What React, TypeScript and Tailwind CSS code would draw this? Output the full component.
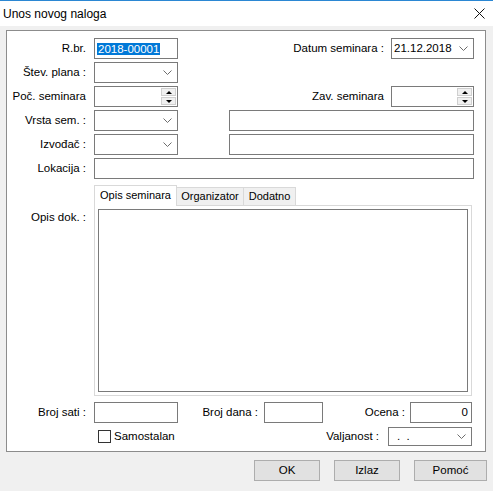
import React from 'react';

const Chevron = () => (
  <svg width="9" height="5" viewBox="0 0 9 5" className="shrink-0">
    <path d="M0.5 0.5 L4.5 4.5 L8.5 0.5" fill="none" stroke="#6d6d6d" strokeWidth="1" />
  </svg>
);

const Label = ({ children, w = 'w-[79px]' }: { children: React.ReactNode; w?: string }) => (
  <div className={`${w} shrink-0 text-right whitespace-nowrap leading-[13px]`}>{children}</div>
);

const TextBox = ({ className = 'w-[84px]', children }: { className?: string; children?: React.ReactNode }) => (
  <div className={`${className} flex h-[21px] shrink-0 items-center border border-[#7a7a7a] bg-white`}>{children}</div>
);

const Select = ({ className = 'w-[84px]', text, h = 'h-[21px]', textClass = 'pl-[2px]' }: { className?: string; text?: string; h?: string; textClass?: string }) => (
  <div className={`${className} ${h} flex shrink-0 items-center justify-between border border-[#7a7a7a] bg-white pr-[5px]`}>
    <span className={`${textClass} whitespace-pre leading-[13px]`}>{text ?? ''}</span>
    <Chevron />
  </div>
);

const Spin = ({ className = 'w-[84px]' }: { className?: string }) => (
  <div className={`${className} flex h-[21px] shrink-0 justify-end border border-[#7a7a7a] bg-white p-px`}>
    <div className="flex w-[15px] flex-col gap-px">
      <div className="flex flex-1 items-center justify-center border border-[#cfcfcf] bg-[#f0f0f0]">
        <div className="h-0 w-0 border-x-[3px] border-b-[3px] border-x-transparent border-b-black" />
      </div>
      <div className="flex flex-1 items-center justify-center border border-[#cfcfcf] bg-[#f0f0f0]">
        <div className="h-0 w-0 border-x-[3px] border-t-[3px] border-x-transparent border-t-black" />
      </div>
    </div>
  </div>
);

const Row = ({ children, className = '' }: { children: React.ReactNode; className?: string }) => (
  <div className={`flex h-[21px] items-center ${className}`}>{children}</div>
);

export default function App() {
  return (
    <div className="h-[491px] w-[493px] overflow-hidden bg-[#f0f0f0] font-['Liberation_Sans',Arial,sans-serif] text-[11.5px] text-black">
      {/* title bar */}
      <div className="flex h-[26px] items-center justify-between border-t border-[#2b87d3] bg-white pl-[3px] pr-[8px]">
        <span className="text-[12px] leading-[16px]">Unos novog naloga</span>
        <svg width="11" height="11" viewBox="0 0 11 11">
          <path d="M0.5 0.5 L10.5 10.5 M10.5 0.5 L0.5 10.5" stroke="#111" strokeWidth="1" />
        </svg>
      </div>

      <div className="px-[6px] pt-[4px]">
        {/* group box */}
        <div className="flex h-[422px] w-[480px] flex-col border border-[#8c8c8c] bg-white pt-[7px]">
          <div className="flex flex-col gap-[3px] pr-[11px]">
            <Row>
              <Label>R.br.</Label>
              <TextBox className="ml-[8px] w-[84px]">
                <span className="ml-[2px] bg-[#0078d7] px-px leading-[12px] text-white">2018-00001</span>
              </TextBox>
              <div className="flex-1" />
              <Label w="">Datum seminara :</Label>
              <Select className="ml-[7px] w-[83px]" text="21.12.2018" />
            </Row>
            <Row>
              <Label>Štev. plana :</Label>
              <Select className="ml-[8px] w-[84px]" />
            </Row>
            <Row>
              <Label>Poč. seminara</Label>
              <Spin className="ml-[8px] w-[84px]" />
              <div className="flex-1" />
              <Label w="">Zav. seminara</Label>
              <Spin className="ml-[7px] w-[83px]" />
            </Row>
            <Row>
              <Label>Vrsta sem. :</Label>
              <Select className="ml-[8px] w-[84px]" />
              <TextBox className="ml-[51px] flex-1" />
            </Row>
            <Row>
              <Label>Izvođač :</Label>
              <Select className="ml-[8px] w-[84px]" />
              <TextBox className="ml-[51px] flex-1" />
            </Row>
            <Row>
              <Label>Lokacija :</Label>
              <TextBox className="ml-[8px] flex-1" />
            </Row>
          </div>

          {/* tabs */}
          <div className="ml-[87px] mt-[6px] flex h-[20px] items-end text-[11px]">
            <div className="relative z-10 -mb-px flex h-[21px] w-[83px] items-center justify-center border-x border-t border-[#d9d9d9] bg-white pb-[2px]">
              Opis seminara
            </div>
            <div className="flex h-[18px] w-[67px] items-center justify-center border-r border-t border-[#d9d9d9] bg-[#f0f0f0]">
              Organizator
            </div>
            <div className="flex h-[18px] w-[52px] items-center justify-center border-r border-t border-[#d9d9d9] bg-[#f0f0f0]">
              Dodatno
            </div>
          </div>
          <div className="flex">
            <Label>
              <div className="pt-[6px]">Opis dok. :</div>
            </Label>
            <div className="ml-[8px] h-[191px] w-[378px] border border-[#d9d9d9] bg-white p-[3px]">
              <div className="h-full border border-[#7a7a7a] bg-white" />
            </div>
          </div>

          <Row className="mt-[6px]">
            <Label>Broj sati :</Label>
            <TextBox className="ml-[8px] w-[84px]" />
            <Label w="w-[80px]">Broj dana :</Label>
            <TextBox className="ml-[6px] w-[59px]" />
            <Label w="w-[82px]">Ocena :</Label>
            <TextBox className="ml-[5px] w-[62px] justify-end pr-[3px]">
              <span className="leading-[13px]">0</span>
            </TextBox>
          </Row>
          <div className="mt-[4px] flex h-[19px] items-center pr-[13px]">
            <div className="ml-[91px] h-[13px] w-[13px] border border-[#333] bg-white" />
            <span className="ml-[3px] leading-[13px]">Samostalan</span>
            <div className="flex-1" />
            <span className="leading-[13px]">Valjanost :</span>
            <Select className="ml-[9px] w-[84px]" h="h-[19px]" text={'.  .'} textClass="pl-[8px]" />
          </div>
        </div>

        {/* buttons */}
        <div className="mt-[8px] flex justify-end gap-[14px]">
          <button className="flex h-[21px] w-[66px] items-center justify-center border border-[#adadad] bg-[#e1e1e1]">OK</button>
          <button className="flex h-[21px] w-[66px] items-center justify-center border border-[#adadad] bg-[#e1e1e1]">Izlaz</button>
          <button className="flex h-[21px] w-[73px] items-center justify-center border border-[#adadad] bg-[#e1e1e1]">Pomoć</button>
        </div>
      </div>
    </div>
  );
}
